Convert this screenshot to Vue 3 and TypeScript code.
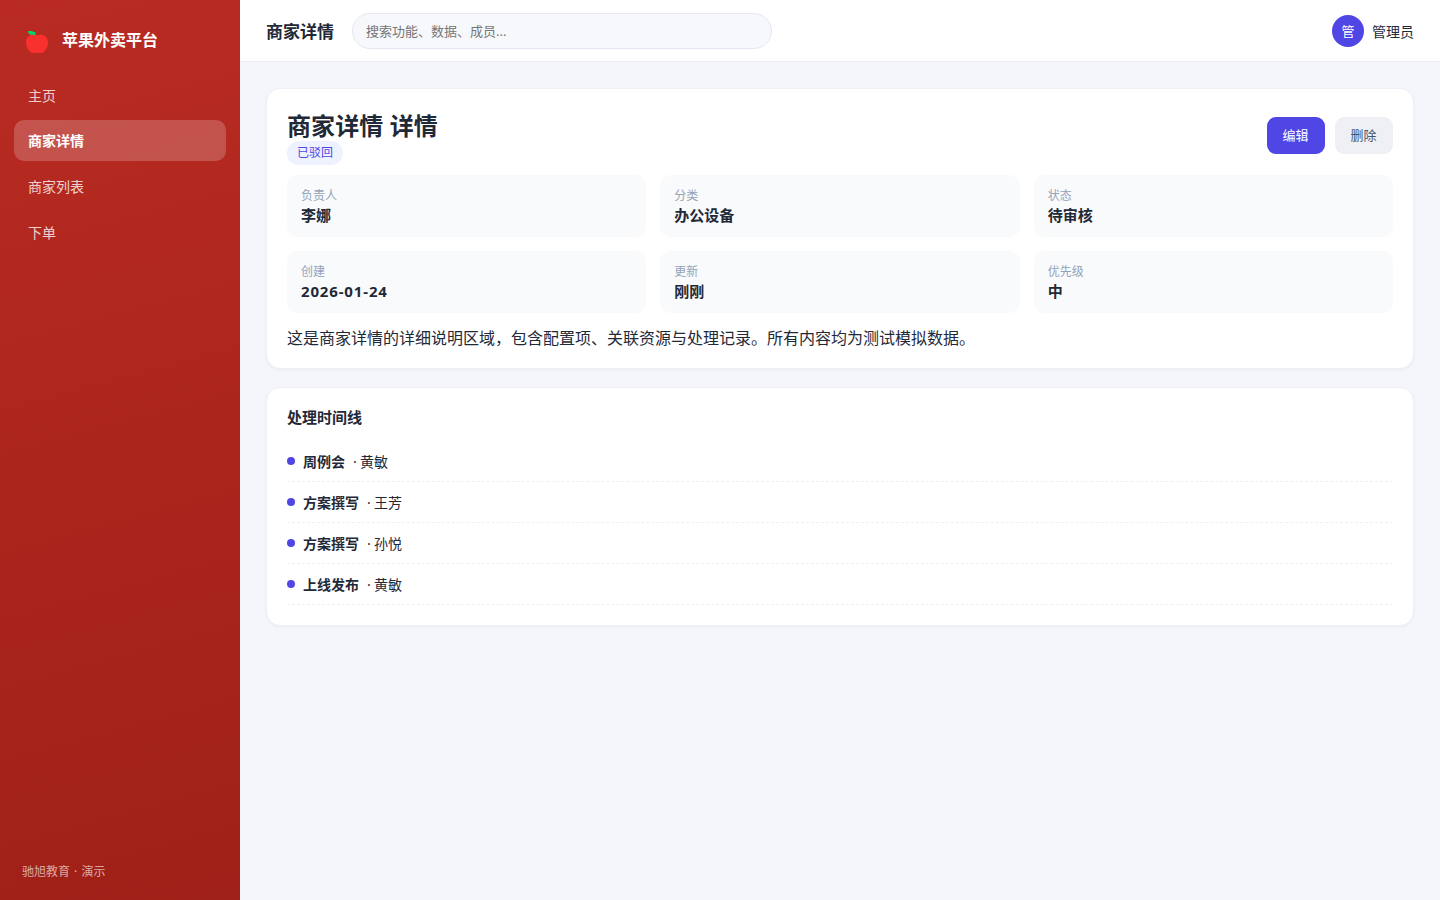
<script setup lang="ts">
interface Field { label: string; value: string; date?: boolean }
interface Step { title: string; person: string }

const nav: string[] = ['主页', '商家详情', '商家列表', '下单']
const current = '商家详情'
const fields: Field[] = [
  { label: '负责人', value: '李娜' },
  { label: '分类', value: '办公设备' },
  { label: '状态', value: '待审核' },
  { label: '创建', value: '2026-01-24', date: true },
  { label: '更新', value: '刚刚' },
  { label: '优先级', value: '中' },
]
const steps: Step[] = [
  { title: '周例会', person: '黄敏' },
  { title: '方案撰写', person: '王芳' },
  { title: '方案撰写', person: '孙悦' },
  { title: '上线发布', person: '黄敏' },
]
</script>

<template>
  <div class="app">
    <aside class="sidebar">
      <div class="brand">
        <svg class="logo" width="24" height="24" viewBox="0 0 24 24" aria-hidden="true">
          <path d="M6 5C3.800 4.200 3 3 3 1h4.500l.8 1h2l.7 3.500z" fill="#00d26a" />
          <path d="M12 5.600C13.500 4.900 15.500 4.700 17.500 4.900c3.500.6 5.500 3.800 5.500 7.600-.1 3.500-1.500 6.700-3.700 8.900-1.500 1.500-3 1.600-4.300 1.600H9c-1.700 0-3.100-.5-4.300-1.700C2.500 19.200 1 16 1 12.500 1 8.600 3 5.500 6.500 4.900c2-.2 4 0 5.500.7z" fill="#f8312f" />
        </svg>
        <span class="brand-name">苹果外卖平台</span>
      </div>
      <nav class="nav">
        <a v-for="item in nav" :key="item" class="nav-item" :class="{ active: item === current }">{{ item }}</a>
      </nav>
      <div class="side-foot">驰旭教育 · 演示</div>
    </aside>
    <div class="main">
      <header class="topbar">
        <div class="page-name">商家详情</div>
        <input class="search" type="text" placeholder="搜索功能、数据、成员..." />
        <div class="user">
          <span class="avatar">管</span>
          <span class="user-name">管理员</span>
        </div>
      </header>
      <main class="content">
        <section class="card detail">
          <div class="head">
            <div>
              <h1>商家详情 详情</h1>
              <span class="tag">已驳回</span>
            </div>
            <div class="actions">
              <button class="btn primary">编辑</button>
              <button class="btn">删除</button>
            </div>
          </div>
          <div class="grid">
            <div v-for="f in fields" :key="f.label" class="field">
              <div class="label">{{ f.label }}</div>
              <div class="value" :class="{ date: f.date }">{{ f.value }}</div>
            </div>
          </div>
          <p class="desc">这是商家详情的详细说明区域，包含配置项、关联资源与处理记录。所有内容均为测试模拟数据。</p>
        </section>
        <section class="card timeline">
          <h3>处理时间线</h3>
          <div v-for="(s, i) in steps" :key="i" class="step">
            <i class="dot"></i>
            <b>{{ s.title }}</b>
            <span class="sep">·</span>
            <span>{{ s.person }}</span>
          </div>
        </section>
      </main>
    </div>
  </div>
</template>

<style>
body { margin: 0; }
</style>

<style scoped>
.app, .app * { box-sizing: border-box; }
.app {
  display: flex;
  height: 900px;
  background: #f5f6fb;
  color: #1f2937;
  font-family: "Noto Sans", "Noto Sans CJK SC", sans-serif;
  font-size: 14px;
}
.sidebar {
  display: flex;
  flex-direction: column;
  width: 240px;
  flex: none;
  padding: 20px 14px 19px;
  background: linear-gradient(165deg, #b92b22, #9f2018);
  color: #fff;
}
.brand {
  display: flex;
  align-items: center;
  height: 40px;
  padding-left: 11px;
  gap: 13px;
  font-size: 16px;
  font-weight: 700;
}
.logo { margin-top: 3px; }
.brand-name { margin-top: -2px; }
.nav {
  display: flex;
  flex-direction: column;
  gap: 5px;
  margin-top: 14px;
}
.nav-item {
  height: 41px;
  padding: 0 14px;
  line-height: 41px;
  border-radius: 10px;
  color: rgba(255, 255, 255, .8);
}
.nav-item:first-child { padding-top: 1px; }
.nav-item.active {
  background: rgba(255, 255, 255, .2);
  color: #fff;
  font-weight: 700;
}
.side-foot {
  margin-top: auto;
  padding-left: 8px;
  line-height: 18px;
  font-size: 12px;
  word-spacing: 1px;
  color: rgba(255, 255, 255, .62);
}
.main { flex: 1; min-width: 0; }
.topbar {
  display: flex;
  align-items: center;
  height: 62px;
  padding: 0 26px;
  background: #fff;
  border-bottom: 1px solid #eceef4;
}
.page-name { font-size: 17px; font-weight: 700; margin-right: 18px; line-height: 24px; padding-top: 2px; }
.search {
  width: 420px;
  height: 36px;
  padding: 0 14px 0 13px;
  border: 1px solid #e5e7f0;
  border-radius: 18px;
  background: #f7f8fc;
  font: 13px "Noto Sans", "Noto Sans CJK SC", sans-serif;
}
.search::placeholder { color: #757575; }
.user { display: flex; align-items: center; gap: 8px; margin-left: auto; line-height: 20px; }
.user-name { padding-top: 2px; }
.avatar {
  width: 32px;
  height: 32px;
  border-radius: 50%;
  background: #4f46e5;
  color: #fff;
  text-align: center;
  line-height: 32px;
  font-size: 13px;
}
.content { padding: 26px; }
.card {
  border: 1px solid #eff0f6;
  border-radius: 14px;
  background: #fff;
  box-shadow: 0 1px 3px rgba(30, 41, 80, .05);
  padding: 20px;
}
.detail { height: 281px; }
.head {
  display: flex;
  justify-content: space-between;
  align-items: center;
  height: 56px;
}
h1 { margin: 0; font-size: 24px; line-height: 30px; padding-top: 2px; font-weight: 700; letter-spacing: .1px; }
.tag {
  display: block;
  width: 56px;
  height: 24px;
  line-height: 24px;
  border-radius: 12px;
  background: #eef2ff;
  color: #4f46e5;
  text-align: center;
  font-size: 12px;
}
.actions { display: flex; gap: 10px; margin-bottom: 4px; }
.btn {
  width: 58px;
  height: 37px;
  padding: 0 1px 1px 0;
  border: 0;
  border-radius: 9px;
  background: #eef0f4;
  color: #475569;
  font: 13px "Noto Sans", "Noto Sans CJK SC", sans-serif;
}
.btn.primary { background: #4f46e5; color: #fff; }
.grid {
  display: grid;
  grid-template-columns: repeat(3, 1fr);
  gap: 14px;
  margin-top: 10px;
}
.field {
  height: 62px;
  padding: 12px 14px;
  border-radius: 10px;
  background: #f9fafc;
}
.label { font-size: 12px; line-height: 18px; color: #94a3b8; }
.value { font-size: 15px; line-height: 20px; font-weight: 700; }
.value.date { letter-spacing: .85px; }
.desc { margin: 14px 0 0; font-size: 16px; line-height: 22px; }
.timeline { height: 239px; margin-top: 18px; padding-top: 19px; }
h3 { margin: 0 0 14px; font-size: 15px; line-height: 20px; font-weight: 700; }
.step {
  display: flex;
  align-items: center;
  height: 41px;
  border-bottom: 1px dashed #eef0f3;
}
.dot {
  width: 8px;
  height: 8px;
  margin-right: 8px;
  border-radius: 50%;
  background: #4f46e5;
}
.sep { width: 5px; margin-left: 8px; margin-right: 2px; }
</style>
